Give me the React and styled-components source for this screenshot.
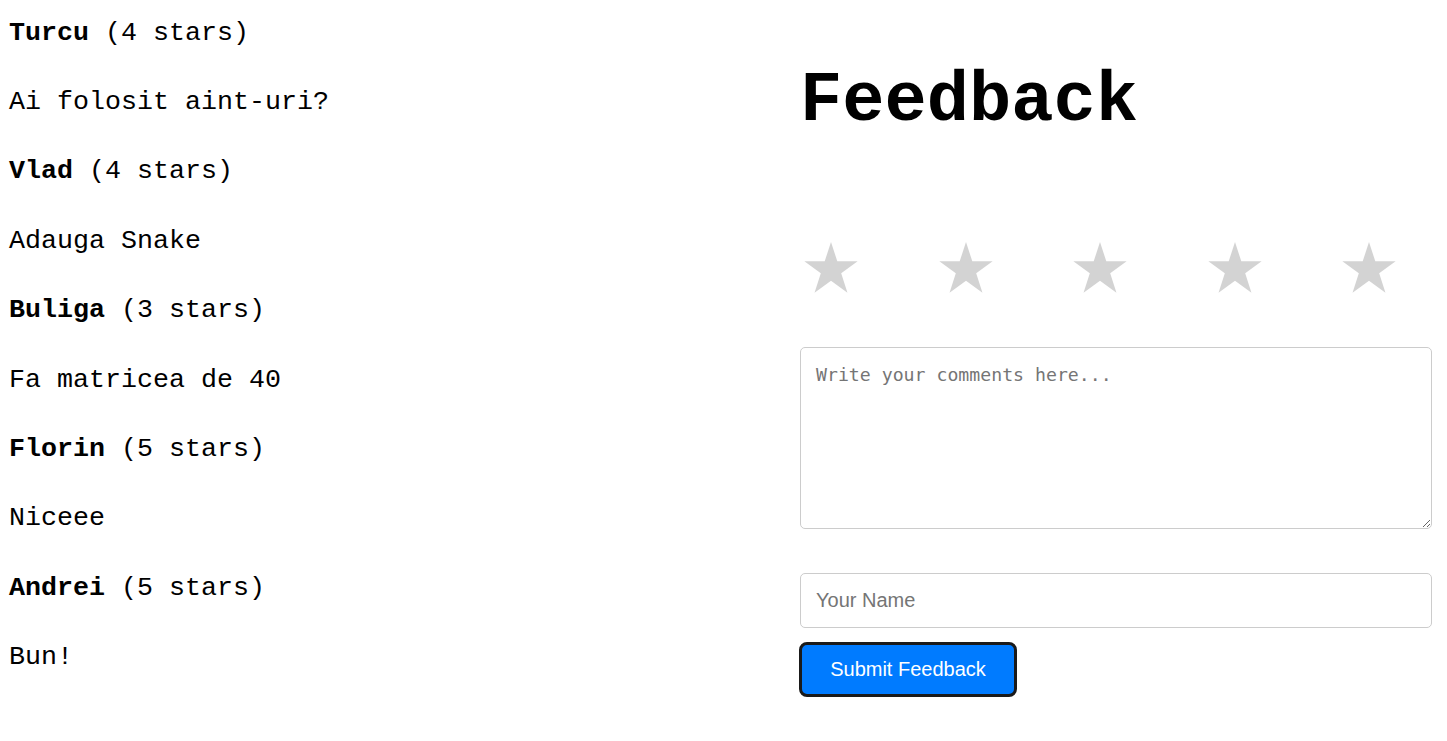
import React from "react";
import styled, { createGlobalStyle } from "styled-components";

const Global = createGlobalStyle`
  html, body { margin: 0; padding: 0; background: #fff; }
  body { font-family: "Liberation Mono", "Courier New", monospace; color: #000; }
`;

const Page = styled.div`
  display: grid;
  grid-template-columns: 792px 632px;
  padding: 0 8px;
  align-items: start;
`;

const Reviews = styled.div`
  padding: 11.6px 0 0 1px;
`;

const Line = styled.p`
  margin: 0 0 26.73px 0;
  font-size: 26.67px;
  line-height: 1.6;
  white-space: pre;
`;

const Name = styled.strong`
  font-weight: bold;
`;

const FormCol = styled.div`
  display: flex;
  flex-direction: column;
  padding-top: 61px;
`;

const Title = styled.h1`
  margin: 0;
  font-size: 70.4px;
  line-height: 80px;
  font-weight: bold;
  font-family: "Liberation Mono", "Courier New", monospace;
`;

const StarRow = styled.div`
  display: flex;
  gap: 80.6px;
  margin: 101px 0 0 4px;
`;

const StarSvg = styled.svg`
  width: 54px;
  height: 51px;
  display: block;
  fill: ${(p) => (p.$active ? "#ffc107" : "#d3d3d3")};
  cursor: pointer;
`;

const Comments = styled.textarea`
  margin-top: 54px;
  box-sizing: border-box;
  width: 632px;
  height: 182px;
  padding: 16px 15px 15px;
  border: 1px solid #ccc;
  border-radius: 5px;
  font-family: "DejaVu Sans Mono", monospace;
  font-size: 18.2px;
  color: #000;
  outline: none;
  resize: both;
  &::placeholder { color: #757575; }
`;

const NameInput = styled.input`
  margin-top: 44px;
  box-sizing: border-box;
  width: 632px;
  height: 55px;
  padding: 15px;
  border: 1px solid #ccc;
  border-radius: 5px;
  font-family: "Liberation Sans", Arial, sans-serif;
  font-size: 20px;
  outline: none;
  &::placeholder { color: #757575; }
`;

const Submit = styled.button`
  margin-top: 14px;
  margin-left: -1px;
  align-self: flex-start;
  box-sizing: border-box;
  width: 218px;
  height: 55px;
  padding: 0 28px;
  background: #007bff;
  color: #fff;
  border: 3px solid #1a1a1a;
  border-radius: 8px;
  font-family: "Liberation Sans", Arial, sans-serif;
  font-size: 20px;
  cursor: pointer;
`;

const reviews = [
  { name: "Turcu", stars: 4, text: "Ai folosit aint-uri?" },
  { name: "Vlad", stars: 4, text: "Adauga Snake" },
  { name: "Buliga", stars: 3, text: "Fa matricea de 40" },
  { name: "Florin", stars: 5, text: "Niceee" },
  { name: "Andrei", stars: 5, text: "Bun!" },
];

const Star = () => (
  <StarSvg viewBox="0 0 54 51">
    <polygon points="27,0 33.29,19.34 53.63,19.35 37.18,31.31 43.46,50.65 27,38.7 10.54,50.65 16.82,31.31 0.37,19.35 20.71,19.34" />
  </StarSvg>
);

export default function App() {
  return (
    <>
      <Global />
      <Page>
        <Reviews>
          {reviews.map((r) => (
            <React.Fragment key={r.name}>
              <Line>
                <Name>{r.name}</Name> ({r.stars} stars)
              </Line>
              <Line>{r.text}</Line>
            </React.Fragment>
          ))}
        </Reviews>
        <FormCol>
          <Title>Feedback</Title>
          <StarRow>
            {[1, 2, 3, 4, 5].map((i) => (
              <Star key={i} />
            ))}
          </StarRow>
          <Comments placeholder="Write your comments here..." />
          <NameInput placeholder="Your Name" />
          <Submit>Submit Feedback</Submit>
        </FormCol>
      </Page>
    </>
  );
}
